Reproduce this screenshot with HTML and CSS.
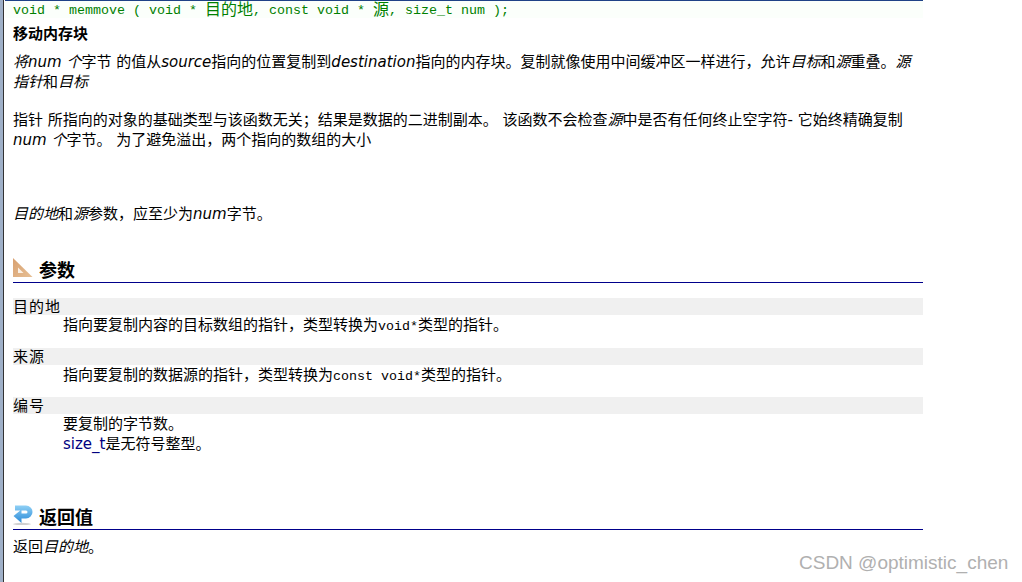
FILE: index.html
```html
<!DOCTYPE html>
<html lang="zh">
<head>
<meta charset="utf-8">
<title>memmove</title>
<link rel="stylesheet" href="styles.css">
</head>
<body>
<main class="page">
  <div class="content">
    <pre class="proto">void * memmove ( void * <span class="cjk">目的地</span>, const void * <span class="cjk">源</span>, size_t num );</pre>
    <h1 class="title">移动内存块</h1>
    <p class="para one"><i>将num 个</i>字节 的值从<i>source</i>指向的位置复制到<i>destination</i>指向的内存块。复制就像使用中间缓冲区一样进行，允许<i>目标</i>和<i>源</i>重叠。<i>源指针</i>和<i>目标</i></p>
    <p class="para two">指针 所指向的对象的基础类型与该函数无关；结果是数据的二进制副本。 该函数不会检查<i>源</i>中是否有任何终止空字符- 它始终精确复制<i>num 个</i>字节。 为了避免溢出，两个指向的数组的大小</p>
    <p class="para three"><i>目的地</i>和<i>源</i>参数，应至少为<i>num</i>字节。</p>
    <h2 class="section first">
      <svg class="icon" viewBox="0 0 20 20" aria-hidden="true">
        <defs><linearGradient id="r" x1="0" y1="0" x2="1" y2="1"><stop offset="0" stop-color="#d8a070"/><stop offset="1" stop-color="#e6bf94"/></linearGradient></defs>
        <path fill="url(#r)" d="M0 0 L19.5 19 H0 Z"/>
        <path fill="#fbf0e4" d="M5 9.5 V15 H10.5 Z"/>
      </svg>
      <span>参数</span>
    </h2>
    <dl class="params">
      <dt>目的地</dt>
      <dd>指向要复制内容的目标数组的指针，类型转换为<code>void*</code>类型的指针。</dd>
      <dt>来源</dt>
      <dd class="tight">指向要复制的数据源的指针，类型转换为<code>const void*</code>类型的指针。</dd>
      <dt>编号</dt>
      <dd>要复制的字节数。<br><a class="link">size_t</a>是无符号整型。</dd>
    </dl>
    <h2 class="section second">
      <svg class="icon" viewBox="0 0 20 20" aria-hidden="true">
        <defs><linearGradient id="b" x1="0" y1="0" x2="0" y2="1"><stop offset="0" stop-color="#8fd0f5"/><stop offset="1" stop-color="#2a8ad8"/></linearGradient></defs>
        <ellipse cx="9" cy="19" rx="9" ry="1.2" fill="#d0d0d0"/>
        <path fill="url(#b)" d="M2 0.5 H13 A6.5 6.5 0 0 1 13 13.5 H8.5 V18 L0.5 11 L8.5 4.5 V8.5 H13 A1.5 1.5 0 0 0 13 5.5 H2 Z"/>
      </svg>
      <span>返回值</span>
    </h2>
    <p class="para ret">返回<i>目的地</i>。</p>
  </div>
</main>
<div class="watermark">CSDN @optimistic_chen</div>
</body>
</html>
```
FILE: styles.css
```css
html, body {
  margin: 0;
  padding: 0;
  background: #fff;
}
body {
  width: 1022px;
  height: 582px;
  overflow: hidden;
  position: relative;
  font-family: "DejaVu Sans", "Noto Sans CJK SC", sans-serif;
  font-size: 15px;
  color: #000;
}
.page {
  width: 923px;
  height: 582px;
  box-sizing: border-box;
  background: #fff;
  border-left: 3px solid #9fb0c8;
  box-shadow: inset 1px 0 0 #333;
}
.content {
  padding-left: 2px;
}
.proto {
  margin: 0;
  height: 17px;
  padding: 0 0 0 8px;
  border-top: 1px solid #1f4287;
  background: #fbfffb;
  color: #008000;
  font: 13.33px/19px "Liberation Mono", "Noto Sans CJK SC", monospace;
  white-space: pre;
}
.cjk { font-size: 16px; line-height: 0; vertical-align: -1px; }
.title {
  margin: 6px 0 0 8px;
  font-size: 15px;
  line-height: 20px;
  font-weight: bold;
}
.para {
  margin: 0 0 0 8px;
  line-height: 20px;
  width: 910px;
}
.one { margin-top: 8px; }
.two { margin-top: 18px; }
.three { margin-top: 54px; }
.section {
  margin: 0 0 0 8px;
  display: flex;
  align-items: flex-end;
  gap: 6px;
  border-bottom: 1px solid #00008b;
  font-size: 18px;
  line-height: 22px;
  font-weight: bold;
}
.first { margin-top: 34px; }
.second { margin-top: 51px; }
.icon {
  width: 20px;
  height: 20px;
  flex: none;
  margin-bottom: 4px;
}
.params { margin: 15px 0 0 8px; }
.params dt {
  background: #f0f0f0;
  height: 17px;
  line-height: 19px;
  font-size: 15px;
  letter-spacing: 1px;
}
.params dd {
  margin: 0 0 13px 50px;
  line-height: 20px;
}
.params dd.tight { margin-bottom: 12px; }
.params dd:last-child { margin-bottom: 0; }
code { font-family: "Liberation Mono", monospace; font-size: 13.33px; line-height: 0; }
.link { color: #000080; }
.ret { margin-top: 7px; }
.watermark {
  position: absolute;
  left: 799px;
  top: 552px;
  font-family: "Liberation Sans", sans-serif;
  font-size: 19px;
  line-height: 22px;
  color: #b0b0b0;
  white-space: nowrap;
}
```
